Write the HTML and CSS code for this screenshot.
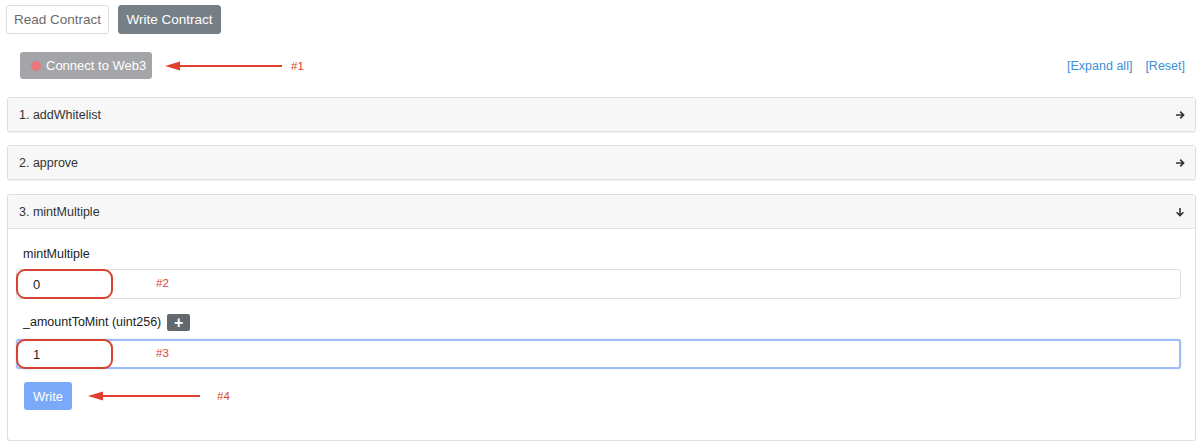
FILE: index.html
```html
<!DOCTYPE html>
<html>
<head>
<meta charset="utf-8">
<link rel="stylesheet" href="styles.css">
</head>
<body>
<div class="page">
  <div class="tabs">
    <button class="tab">Read Contract</button>
    <button class="tab active">Write Contract</button>
  </div>

  <div class="toolbar">
    <div class="connect-wrap">
      <button class="connect"><span class="dot"></span>Connect to Web3</button>
      <div class="note note-1">
        <svg class="arrow" width="118" height="10" viewBox="0 0 118 10"><path d="M14 5 H117" stroke="#e0402d" stroke-width="2"/><path d="M0 5 L15 0.5 L15 9.5 Z" fill="#e0402d"/></svg>
        <span class="tag">#1</span>
      </div>
    </div>
    <div class="links"><a href="#">[Expand all]</a><a href="#">[Reset]</a></div>
  </div>

  <div class="card first">
    <div class="card-head"><span>1. addWhitelist</span>
      <svg class="icon" width="10" height="10" viewBox="0 0 10 10"><path d="M1 5 H8.5 M5.2 1.6 L8.6 5 L5.2 8.4" fill="none" stroke="#333" stroke-width="1.6"/></svg>
    </div>
  </div>

  <div class="card second">
    <div class="card-head"><span>2. approve</span>
      <svg class="icon" width="10" height="10" viewBox="0 0 10 10"><path d="M1 5 H8.5 M5.2 1.6 L8.6 5 L5.2 8.4" fill="none" stroke="#333" stroke-width="1.6"/></svg>
    </div>
  </div>

  <div class="card open">
    <div class="card-head"><span>3. mintMultiple</span>
      <svg class="icon" width="10" height="10" viewBox="0 0 10 10"><path d="M5 1 V8.5 M1.6 5.2 L5 8.6 L8.4 5.2" fill="none" stroke="#333" stroke-width="1.6"/></svg>
    </div>
    <div class="card-body">
      <div class="label">mintMultiple</div>
      <div class="field">
        <input class="input" value="0">
        <span class="ring"></span>
        <span class="tag tag-field">#2</span>
      </div>
      <div class="label label-row">_amountToMint (uint256) <button class="plus">+</button></div>
      <div class="field">
        <input class="input focus" value="1">
        <span class="ring"></span>
        <span class="tag tag-field">#3</span>
      </div>
      <div class="write-row">
        <button class="write">Write</button>
        <div class="note note-4">
          <svg class="arrow" width="114" height="10" viewBox="0 0 114 10"><path d="M14 5 H112" stroke="#e0402d" stroke-width="2"/><path d="M0 5 L15 0.5 L15 9.5 Z" fill="#e0402d"/></svg>
          <span class="tag">#4</span>
        </div>
      </div>
    </div>
  </div>
</div>
</body>
</html>
```

FILE: styles.css
```css
* { box-sizing: border-box; }
body {
  margin: 0;
  background: #fff;
  font-family: "Liberation Sans", Arial, sans-serif;
  font-size: 12.5px;
  color: #212529;
}
button { white-space: nowrap; font-family: inherit; cursor: pointer; }
.page { padding: 5px 4px 0 7px; }

.tabs { display: flex; gap: 9px; margin-left: -1px; }
.tab {
  height: 29px;
  width: 103px;
  padding: 0;
  border: 1px solid #dcdcdc;
  border-radius: 3px;
  background: #fff;
  color: #6b6b6b;
  font-size: 13.5px;
}
.tab.active { background: #767e86; border-color: #767e86; color: #fff; }

.toolbar {
  display: flex;
  justify-content: space-between;
  align-items: center;
  margin-top: 18px;
  padding-left: 13px;
  padding-right: 11px;
}
.connect-wrap { display: flex; align-items: center; }
.connect {
  display: flex;
  align-items: center;
  gap: 5px;
  height: 27px;
  width: 132px;
  padding: 0 0 0 11px;
  border: none;
  border-radius: 3px;
  background: #a3a5a8;
  color: #fff;
  font-size: 13px;
}
.dot { width: 10px; height: 10px; border-radius: 50%; background: #e8767a; flex: none; }
.note { display: flex; align-items: center; }
.note-1 { margin-left: 13px; gap: 8px; }
.tag { color: #e0402d; font-size: 11.5px; }
.links { display: flex; gap: 13px; }
.links a { color: #3d8fd6; text-decoration: none; font-size: 12.5px; }

.card {
  margin-top: 14px;
  border: 1px solid #dedede;
  border-radius: 3px;
  background: #fff;
  box-shadow: 0 1px 1px rgba(0,0,0,0.06);
}
.card.first { margin-top: 18px; }
.card.second { margin-top: 13px; }
.card-head {
  display: flex;
  justify-content: space-between;
  align-items: center;
  height: 33px;
  padding: 0 10px 0 11px;
  background: #f7f7f8;
  color: #333;
}
.card.open .card-head { border-bottom: 1px solid #e3e3e3; height: 34px; }

.card-body { padding: 15px 14px 30px 8px; }
.label { line-height: 20px; padding-left: 7px; color: #222; }
.label-row { display: flex; align-items: center; gap: 6px; margin-top: 13px; }
.plus {
  width: 23px;
  height: 17px;
  padding: 0;
  border: none;
  border-radius: 2px;
  background: #62686e;
  color: #fff;
  font-size: 16px;
  font-weight: bold;
  line-height: 17px;
}
.field { position: relative; margin-top: 5px; }
.label-row + .field { margin-top: 7px; }
.input {
  display: block;
  width: 100%;
  height: 30px;
  padding: 0 16px;
  border: 1px solid #dcdcdc;
  border-radius: 3px;
  font-family: inherit;
  font-size: 13px;
  color: #222;
  background: #fff;
}
.input.focus { border: 2px solid #9dbcf5; padding-left: 15px; box-shadow: 0 0 2px rgba(110,150,240,0.4); }
.ring {
  position: absolute;
  left: 0;
  top: 0;
  width: 97px;
  height: 30px;
  border: 2px solid #d8412f;
  border-radius: 9px;
}
.tag-field { position: absolute; left: 140px; top: 8px; }

.write-row { display: flex; align-items: center; margin-top: 13px; padding-left: 8px; }
.write {
  width: 48px;
  height: 28px;
  border: none;
  border-radius: 3px;
  background: #7aa9f7;
  color: #fff;
  font-size: 13px;
}
.note-4 { margin-left: 16px; gap: 15px; }
```
